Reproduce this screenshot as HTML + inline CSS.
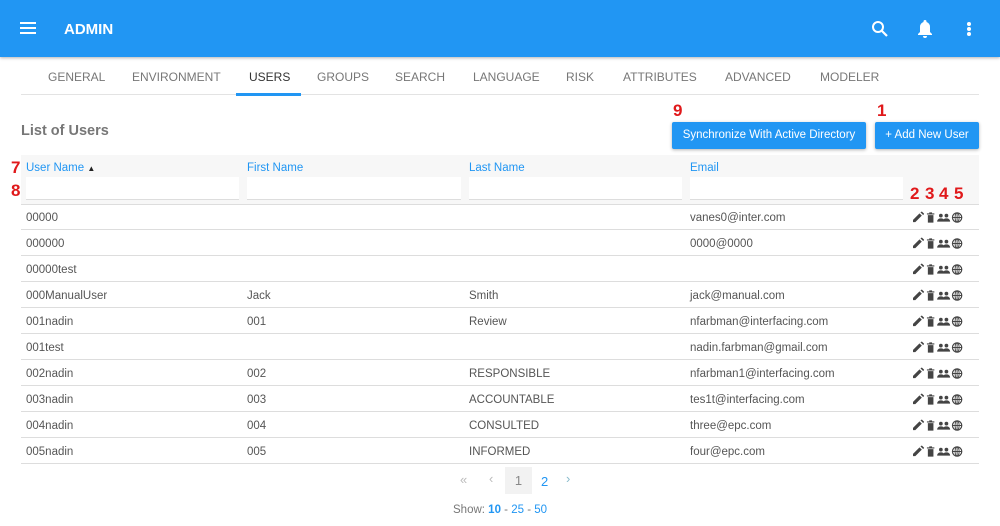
<!DOCTYPE html>
<html><head><style>
*{box-sizing:border-box;margin:0;padding:0}
body{width:1000px;height:526px;overflow:hidden;background:#fff;font-family:"Liberation Sans",sans-serif;position:relative;color:#555}
.hdr{position:absolute;left:0;top:0;width:1000px;height:57px;background:#2196F3;box-shadow:0 1px 3px rgba(0,0,0,.3)}
.abs{position:absolute}
.tab{position:absolute;top:70px;font-size:12px;color:#777}
.r{position:absolute;left:21px;width:958px;height:26px;border-bottom:1px solid #ddd;font-size:11.5px;color:#555}
.r span{position:absolute;top:8px}
.red{position:absolute;color:#e0191b;font-weight:bold;font-size:17px}
.btn{position:absolute;top:122px;height:27px;background:#2196F3;color:#fff;font-size:11.5px;border-radius:2px;box-shadow:0 1px 3px rgba(0,0,0,.3);text-align:center;line-height:27px}
.in{position:absolute;top:177px;height:23px;background:#fff;border-bottom:1px solid #ddd}
.th{position:absolute;top:162px;font-size:11.5px;color:#2196F3}
</style></head><body>
<div class="hdr">
<div class="abs" style="left:20px;top:22px;width:16px;height:2px;background:#fff;box-shadow:0 5px 0 #fff,0 10px 0 #fff"></div>
<div class="abs" style="left:64px;top:21px;color:#fff;font-weight:bold;font-size:15px">ADMIN</div>
<svg class="abs" style="left:871px;top:20px" width="18" height="18" viewBox="0 0 18 18"><circle cx="7" cy="7" r="5" fill="none" stroke="#fff" stroke-width="2"/><path d="M11 11l5 5" stroke="#fff" stroke-width="2.2"/></svg>
<svg class="abs" style="left:916px;top:19px" width="18" height="20" viewBox="0 0 18 20"><path d="M9 1a1.5 1.5 0 0 1 1.5 1.5v.5a5 5 0 0 1 3.5 5v5l2 2v1H2v-1l2-2V8a5 5 0 0 1 3.5-5v-.5A1.5 1.5 0 0 1 9 1z M7 17h4a2 2 0 0 1-4 0z" fill="#fff"/></svg>
<div class="abs" style="left:967px;top:22px;width:4px;height:4px;border-radius:2px;background:#fff;box-shadow:0 5px 0 #fff,0 10px 0 #fff"></div>
</div>
<div class="tab" style="left:48px">GENERAL</div>
<div class="tab" style="left:132px">ENVIRONMENT</div>
<div class="tab" style="left:249px;color:#333">USERS</div>
<div class="tab" style="left:317px">GROUPS</div>
<div class="tab" style="left:395px">SEARCH</div>
<div class="tab" style="left:473px">LANGUAGE</div>
<div class="tab" style="left:566px">RISK</div>
<div class="tab" style="left:623px">ATTRIBUTES</div>
<div class="tab" style="left:725px">ADVANCED</div>
<div class="tab" style="left:820px">MODELER</div>
<div class="abs" style="left:21px;top:94px;width:958px;height:1px;background:#e3e3e3"></div>
<div class="abs" style="left:236px;top:93px;width:65px;height:3px;background:#2196F3"></div>
<div class="abs" style="left:21px;top:123px;font-size:14.5px;font-weight:bold;color:#777">List of Users</div>
<div class="btn" style="left:672px;width:194px">Synchronize With Active Directory</div>
<div class="btn" style="left:875px;width:104px">+ Add New User</div>
<div class="red" style="left:673px;top:101px">9</div>
<div class="red" style="left:877px;top:101px">1</div>
<div class="abs" style="left:21px;top:155px;width:958px;height:50px;background:#f7f7f7;border-bottom:1px solid #ddd"></div>
<div class="th" style="left:26px">User Name <span style="font-size:8px;color:#222">▲</span></div>
<div class="th" style="left:247px">First Name</div>
<div class="th" style="left:469px">Last Name</div>
<div class="th" style="left:690px">Email</div>
<div class="in" style="left:26px;width:213px"></div>
<div class="in" style="left:247px;width:214px"></div>
<div class="in" style="left:469px;width:213px"></div>
<div class="in" style="left:690px;width:213px"></div>
<div class="red" style="left:11px;top:158px">7</div>
<div class="red" style="left:11px;top:181px">8</div>
<div class="red" style="left:910px;top:184px">2</div>
<div class="red" style="left:925px;top:184px">3</div>
<div class="red" style="left:939px;top:184px">4</div>
<div class="red" style="left:954px;top:184px">5</div>
<div id="rows"></div>
<script>
var d=[["00000","","","vanes0@inter.com"],["000000","","","0000@0000"],["00000test","","",""],["000ManualUser","Jack","Smith","jack@manual.com"],["001nadin","001","Review","nfarbman@interfacing.com"],["001test","","","nadin.farbman@gmail.com"],["002nadin","002","RESPONSIBLE","nfarbman1@interfacing.com"],["003nadin","003","ACCOUNTABLE","tes1t@interfacing.com"],["004nadin","004","CONSULTED","three@epc.com"],["005nadin","005","INFORMED","four@epc.com"]];
var ic='<svg style="position:absolute;left:890px;top:7px" width="56" height="13" viewBox="0 0 58 14" fill="#444"><path d="M1 12l0-2.5 7-7 2.5 2.5-7 7z M9 1.5l1.5-1 2.5 2.5-1 1.5z"/><path d="M16 2.5h8v1.3h-8z M17 4.5h6v8h-6z M18.5 1.5h3v1h-3z"/><circle cx="31" cy="5" r="2"/><circle cx="37" cy="5" r="2"/><path d="M27 11.5c0-2.5 2-3.5 4-3.5s4 1 4 3.5z M33 11.5c0-2.5 2-3.5 4-3.5s4 1 4 3.5z"/><circle cx="48.5" cy="7" r="5" fill="none" stroke="#444" stroke-width="1.3"/><path d="M43.5 7h10M48.5 2v10" stroke="#444" stroke-width="1"/><ellipse cx="48.5" cy="7" rx="2.2" ry="5" fill="none" stroke="#444" stroke-width="1"/></svg>';
var h='';d.forEach(function(r,i){h+='<div class="r" style="top:'+(204+26*i)+'px"><span style="left:5px">'+r[0]+'</span><span style="left:226px">'+r[1]+'</span><span style="left:448px">'+r[2]+'</span><span style="left:669px">'+r[3]+'</span>'+ic+'</div>'});
document.getElementById('rows').innerHTML=h;
</script>
<div class="abs" style="left:460px;top:472px;font-size:13px;color:#bbb">«</div>
<div class="abs" style="left:489px;top:471px;font-size:13px;color:#bbb">‹</div>
<div class="abs" style="left:505px;top:467px;width:27px;height:27px;background:#f2f2f2;text-align:center;line-height:27px;font-size:13px;color:#888">1</div>
<div class="abs" style="left:541px;top:474px;font-size:13px;color:#2196F3">2</div>
<div class="abs" style="left:566px;top:471px;font-size:13px;color:#8bc">›</div>
<div class="abs" style="left:453px;top:504px;font-size:11.5px;color:#777">Show: <b style="color:#2196F3">10</b> - <span style="color:#2196F3">25</span> - <span style="color:#2196F3">50</span></div>
</body></html>
